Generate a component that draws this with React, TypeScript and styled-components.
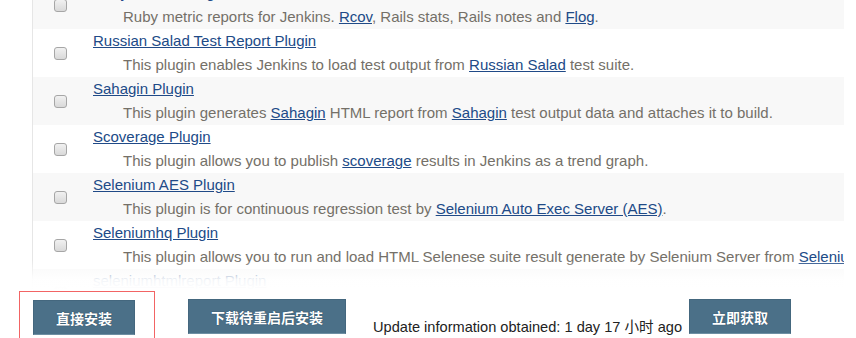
import { createGlobalStyle, styled } from "styled-components";

const GlobalStyle = createGlobalStyle`
  html, body {
    margin: 0;
    background: #fff;
    overflow: hidden;
  }
  body {
    font-family: "Liberation Sans", Arial, "Noto Sans CJK SC", sans-serif;
    font-size: 15px;
    color: #333;
  }
`;

const Page = styled.div`
  width: 856px;
  height: 338px;
  overflow: hidden;
`;

const Viewport = styled.div`
  position: relative;
  height: 290px;
  overflow: hidden;
`;

const PluginTable = styled.div`
  margin-top: -19px;
  margin-left: 32px;
  width: 811px;
  border-left: 1px solid #e6e6e6;
`;

const Row = styled.div<{ $odd: boolean }>`
  display: grid;
  grid-template-columns: 60px 1fr;
  height: 48px;
  background: ${({ $odd }) => ($odd ? "#fff" : "#f8f8f8")};
  overflow: hidden;
`;

const CheckCell = styled.div`
  display: flex;
  align-items: center;
  padding-left: 21px;
`;

const Check = styled.input.attrs({ type: "checkbox" })`
  appearance: none;
  margin: 0;
  width: 13px;
  height: 13px;
  border: 1px solid #a6a6a6;
  border-radius: 3px;
  background: linear-gradient(#f1f1f1, #d9d9d9);
  box-sizing: border-box;
`;

const Info = styled.div`
  white-space: nowrap;
  overflow: hidden;
`;

const Title = styled.a`
  display: inline-block;
  line-height: 24px;
  color: #204a87;
  text-decoration: underline;
`;

const Desc = styled.div`
  padding-left: 30px;
  line-height: 24px;
  color: #747068;
`;

const Link = styled.a`
  color: #204a87;
  text-decoration: underline;
`;

const Fade = styled.div`
  position: absolute;
  left: 0;
  right: 0;
  bottom: 0;
  height: 30px;
  background: linear-gradient(rgba(255, 255, 255, 0), rgba(255, 255, 255, 0.94) 65%, #fff);
`;

const BottomBar = styled.div`
  display: flex;
  align-items: flex-start;
`;

const Highlight = styled.div`
  margin-left: 19px;
  margin-top: 1px;
  height: 60px;
  padding: 8px 19px 0 13px;
  border: 1px solid #f26464;
`;

const Button = styled.button<{ $gap?: number; $top?: number }>`
  height: 35px;
  margin-left: ${({ $gap }) => $gap ?? 0}px;
  margin-top: ${({ $top }) => $top ?? 0}px;
  padding: 0 22px;
  background: #4b7088;
  border: 1px solid #44677e;
  border-bottom-color: #6e8fa3;
  color: #fff;
  font-family: "Noto Sans CJK SC", sans-serif;
  font-size: 14px;
  font-weight: 700;
  text-shadow: 0 0 1px #17324a;
  cursor: pointer;
`;

const UpdateInfo = styled.span`
  margin-left: 27px;
  margin-top: 29px;
  font-size: 14.6px;
  line-height: 16px;
  color: #222;
`;

type Plugin = {
  title: string;
  desc: React.ReactNode;
};

const plugins: Plugin[] = [
  {
    title: "Ruby Metrics Plugin",
    desc: (
      <>
        Ruby metric reports for Jenkins. <Link>Rcov</Link>, Rails stats, Rails
        notes and <Link>Flog</Link>.
      </>
    ),
  },
  {
    title: "Russian Salad Test Report Plugin",
    desc: (
      <>
        This plugin enables Jenkins to load test output from{" "}
        <Link>Russian Salad</Link> test suite.
      </>
    ),
  },
  {
    title: "Sahagin Plugin",
    desc: (
      <>
        This plugin generates <Link>Sahagin</Link> HTML report from{" "}
        <Link>Sahagin</Link> test output data and attaches it to build.
      </>
    ),
  },
  {
    title: "Scoverage Plugin",
    desc: (
      <>
        This plugin allows you to publish <Link>scoverage</Link> results in
        Jenkins as a trend graph.
      </>
    ),
  },
  {
    title: "Selenium AES Plugin",
    desc: (
      <>
        This plugin is for continuous regression test by{" "}
        <Link>Selenium Auto Exec Server (AES)</Link>.
      </>
    ),
  },
  {
    title: "Seleniumhq Plugin",
    desc: (
      <>
        This plugin allows you to run and load HTML Selenese suite result
        generate by Selenium Server from <Link>Seleniumhq</Link>.
      </>
    ),
  },
  {
    title: "seleniumhtmlreport Plugin",
    desc: <>This plugin allows you to publish Selenium HTML reports.</>,
  },
];

export default function App() {
  return (
    <Page>
      <GlobalStyle />
      <Viewport>
        <PluginTable>
          {plugins.map((p, i) => (
            <Row key={p.title} $odd={i % 2 === 1}>
              <CheckCell>
                <Check />
              </CheckCell>
              <Info>
                <Title>{p.title}</Title>
                <Desc>{p.desc}</Desc>
              </Info>
            </Row>
          ))}
        </PluginTable>
        <Fade />
      </Viewport>
      <BottomBar>
        <Highlight>
          <Button>直接安装</Button>
        </Highlight>
        <Button $gap={33} $top={9}>
          下载待重启后安装
        </Button>
        <UpdateInfo>Update information obtained: 1 day 17 小时 ago</UpdateInfo>
        <Button $gap={7} $top={9}>
          立即获取
        </Button>
      </BottomBar>
    </Page>
  );
}
